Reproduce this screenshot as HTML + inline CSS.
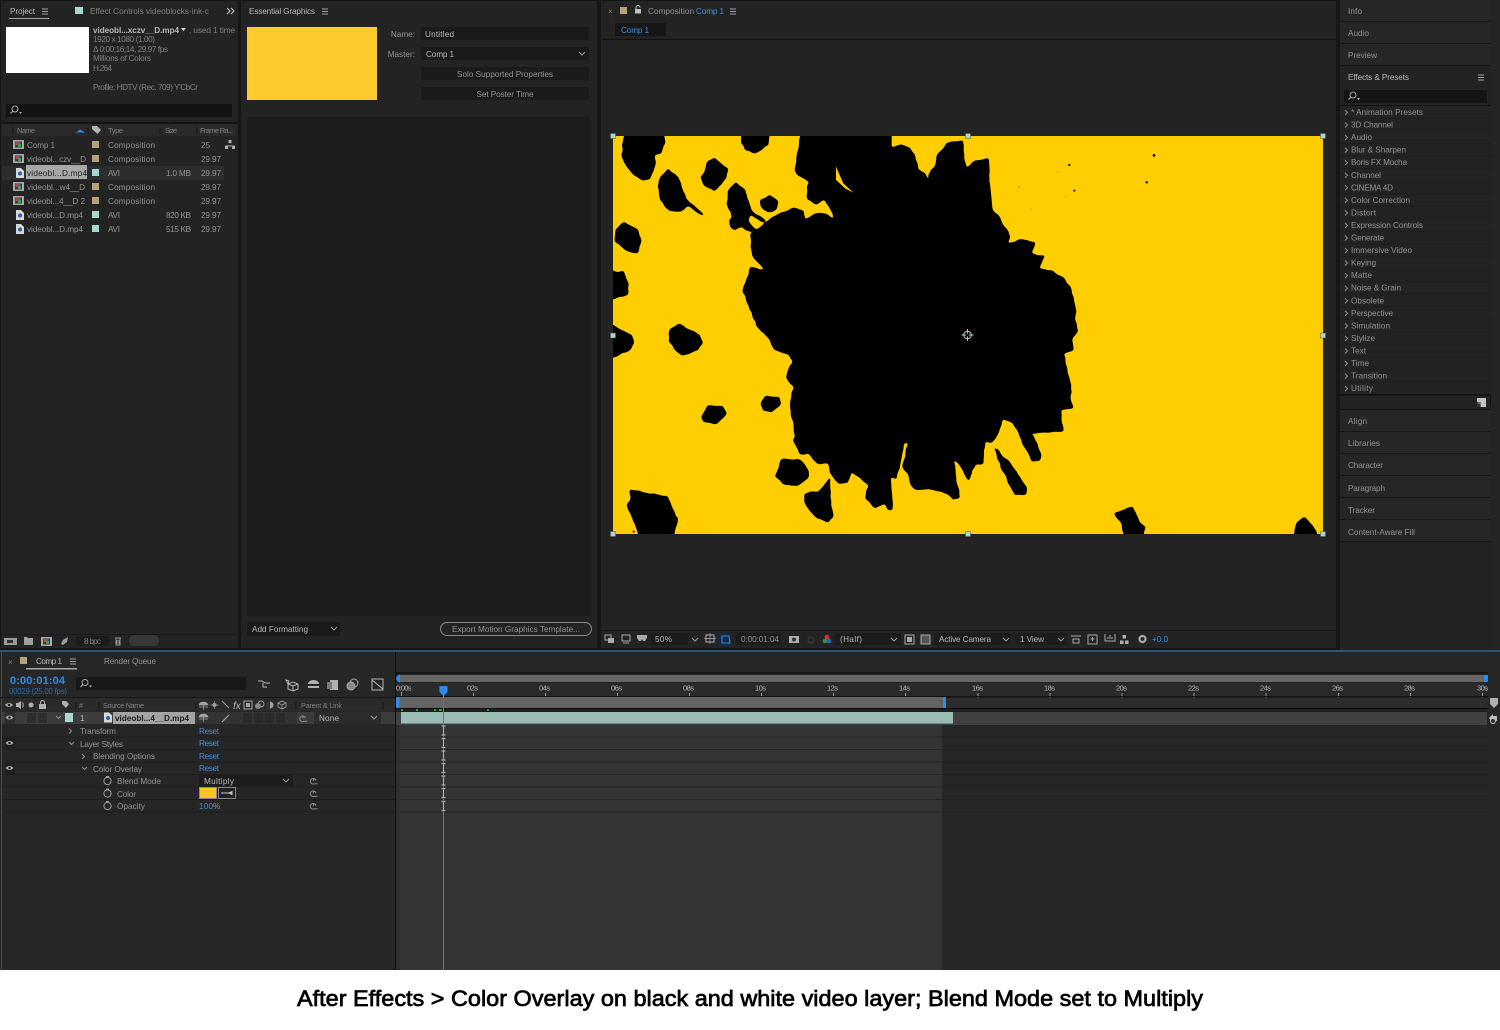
<!DOCTYPE html>
<html><head><meta charset="utf-8"><title>After Effects</title>
<style>
html,body{margin:0;padding:0;background:#fff;width:1500px;height:1030px;overflow:hidden}
svg{display:block;position:absolute;left:0;top:0}
text{font-family:"Liberation Sans",sans-serif;font-size:8.2px;fill:#949494;white-space:pre}
.b{fill:#b8b8b8}.d{fill:#808080}.u{fill:#2d8ceb}.u2{fill:#3f8fd8}.k{fill:#1c1c1c}
</style></head><body>
<svg width="1500" height="1030" viewBox="0 0 1500 1030" xmlns="http://www.w3.org/2000/svg">
<defs>
<filter id="ink" filterUnits="userSpaceOnUse" x="-50" y="-50" width="2400" height="1400" color-interpolation-filters="sRGB">
<feTurbulence type="fractalNoise" baseFrequency=".04" numOctaves="2" seed="4" result="n"/>
<feDisplacementMap in="SourceGraphic" in2="n" scale="9" xChannelSelector="R" yChannelSelector="G" result="dm"/>
<feGaussianBlur in="dm" stdDeviation="4"/>
<feComponentTransfer><feFuncA type="linear" slope="6" intercept="-2.5"/></feComponentTransfer>
</filter>
<g id="film"><rect x="0" y="0" width="11" height="9" fill="#a8a8a8"/><rect x="2" y="1.500" width="7" height="6" fill="#3a3a3a"/><rect x="2.500" y="2" width="3" height="3" fill="#c84040"/><rect x="5" y="4" width="3" height="3" fill="#3aa04a"/><rect x="5.500" y="2" width="2" height="2" fill="#3060c0"/></g>
<g id="doc"><path d="M1 0h5l3 3v7H1z" fill="#d8d8d8"/><circle cx="5" cy="5.500" r="2" fill="#2a62b8"/></g>
<g id="eye"><path d="M-4 0Q0-4 4 0Q0 4-4 0Z" fill="#b0b0b0"/><circle r="1.300" fill="#222"/></g>
<g id="sw"><circle cx="0" cy="0" r="3.600" fill="none" stroke="#a0a0a0" stroke-width="1"/><path d="M-1.500-4.500h3" stroke="#a0a0a0"/></g>
<g id="spiral"><path d="M-1 1a1.300 1.300 0 1 1 2.300-.5a2.800 2.800 0 1 0-1.500 3.300h3.200" fill="none" stroke="#969696" stroke-width=".9"/></g>
<g id="mg"><circle cx="1" cy="-1" r="3" fill="none" stroke="#aaa"/><path d="M-1 1l-2.500 2.500" stroke="#aaa" stroke-width="1.200"/><path d="M5 2h3l-1.500 2z" fill="#aaa"/></g>
<g id="ibeam"><path d="M-2-4.500h4M-2 4.500h4M0-4.500v9" stroke="#a8a8a8" stroke-width="1.200" fill="none"/></g>
<g id="menu"><path d="M0 0h6M0 2.500h6M0 5h6" stroke="#a0a0a0" stroke-width="1"/></g>
<g id="chev"><path d="M0 0l3 3 3-3" fill="none" stroke="#9a9a9a" stroke-width="1"/></g>
<g id="cr"><path d="M0 0l2.500 2.500L0 5" fill="none" stroke="#909090" stroke-width="1"/></g>
<g id="cd"><path d="M0 0l2.500 2.500L5 0" fill="none" stroke="#909090" stroke-width="1"/></g>
</defs>

<!-- base -->
<rect width="1500" height="1030" fill="#161616"/>
<rect y="970" width="1500" height="60" fill="#fff"/>
<rect x="1491" y="0" width="9" height="650" fill="#242424"/>

<!-- PROJECT -->
<rect x="1" y="1" width="237" height="647" fill="#232323"/>
<text x="10" y="14" class="b" textLength="25">Project</text>
<rect x="9" y="18" width="40" height="1" fill="#a0a0a0"/>
<use href="#menu" x="42" y="9"/>
<rect x="75" y="7" width="8" height="7" fill="#a9d6d0"/>
<text x="90" y="14" class="d" textLength="119">Effect Controls videoblocks-ink-c</text>
<path d="M227 8l3 3-3 3M231 8l3 3-3 3" fill="none" stroke="#c0c0c0" stroke-width="1.100"/>
<rect x="6" y="27" width="83" height="46" fill="#fff"/>
<text x="93" y="33" style="font-weight:bold" class="b" textLength="86">videobl...xczv__D.mp4</text>
<path d="M181 28h5l-2.500 3z" fill="#ddd"/>
<text x="189" y="33" class="d" textLength="46">, used 1 time</text>
<text x="93" y="42" class="d" textLength="62">1920 x 1080 (1.00)</text>
<text x="93" y="52" class="d" textLength="75">Δ 0;00;16;14, 29.97 fps</text>
<text x="93" y="61" class="d" textLength="58">Millions of Colors</text>
<text x="93" y="71" class="d" textLength="19">H.264</text>
<text x="93" y="90" class="d" textLength="105">Profile: HDTV (Rec. 709) Y'CbCr</text>
<rect x="6" y="104" width="226" height="13" rx="1" fill="#131313"/>
<use href="#mg" x="14" y="110"/>
<rect x="1" y="122" width="237" height="2" fill="#141414"/>
<rect x="2" y="124" width="234" height="12" fill="#2a2a2a"/>
<text x="17" y="133" class="d" textLength="18" style="font-size:7.500px">Name</text>
<path d="M76 132.500l4-3 5 3z" fill="#2d8ceb"/>
<path d="M13 127v7M88 127v7M104 127v7M160 127v7M197 127v7" stroke="#161616"/>
<path d="M92 126h5l4 4-3.500 4-5.500-5z" fill="#b4b4b4"/>
<text x="108" y="133" class="d" textLength="15" style="font-size:7.500px">Type</text>
<text x="165" y="133" class="d" textLength="12" style="font-size:7.500px">Size</text>
<text x="200" y="133" class="d" textLength="33" style="font-size:7.500px">Frame Ra...</text>
<rect x="2" y="166" width="222" height="14" fill="#2d2d2d"/>
<rect x="26" y="165" width="61" height="14" fill="#a8a8a8"/>

<use href="#film" x="13" y="140"/><text x="27" y="148" textLength="28">Comp 1</text><rect x="92" y="141" width="7" height="7" fill="#b5a27e"/><text x="108" y="148" textLength="47">Composition</text><text x="201" y="148">25</text>
<path d="M230 140.500v3M226 148v-2h8v2" fill="none" stroke="#b0b0b0"/><rect x="228.500" y="140" width="3" height="3" fill="#b0b0b0"/><rect x="225" y="146" width="3" height="3" fill="#b0b0b0"/><rect x="232" y="146" width="3" height="3" fill="#b0b0b0"/>
<use href="#film" x="13" y="154"/><text x="27" y="162" textLength="59">videobl...czv__D</text><rect x="92" y="155" width="7" height="7" fill="#b5a27e"/><text x="108" y="162" textLength="47">Composition</text><text x="201" y="162" textLength="20">29.97</text>
<use href="#doc" x="15" y="168"/><text x="27" y="176" class="k" textLength="60">videobl...D.mp4</text><rect x="92" y="169" width="7" height="7" fill="#a9d6d0"/><text x="108" y="176" textLength="12">AVI</text><text x="166" y="176" textLength="25">1.0 MB</text><text x="201" y="176" textLength="20">29.97</text>
<use href="#film" x="13" y="182"/><text x="27" y="190" textLength="58">videobl...w4__D</text><rect x="92" y="183" width="7" height="7" fill="#b5a27e"/><text x="108" y="190" textLength="47">Composition</text><text x="201" y="190" textLength="20">29.97</text>
<use href="#film" x="13" y="196"/><text x="27" y="204" textLength="58">videobl...4__D 2</text><rect x="92" y="197" width="7" height="7" fill="#b5a27e"/><text x="108" y="204" textLength="47">Composition</text><text x="201" y="204" textLength="20">29.97</text>
<use href="#doc" x="15" y="210"/><text x="27" y="218" textLength="56">videobl...D.mp4</text><rect x="92" y="211" width="7" height="7" fill="#a9d6d0"/><text x="108" y="218" textLength="12">AVI</text><text x="166" y="218" textLength="25">820 KB</text><text x="201" y="218" textLength="20">29.97</text>
<use href="#doc" x="15" y="224"/><text x="27" y="232" textLength="56">videobl...D.mp4</text><rect x="92" y="225" width="7" height="7" fill="#a9d6d0"/><text x="108" y="232" textLength="12">AVI</text><text x="166" y="232" textLength="25">515 KB</text><text x="201" y="232" textLength="20">29.97</text>

<rect x="1" y="634" width="237" height="1" fill="#191919"/>
<rect x="4" y="638" width="13" height="7" fill="#999"/><rect x="7" y="640" width="6" height="3" fill="#333"/>
<path d="M24 637h3l1 1h5v7h-9z" fill="#a0a0a0"/>
<use href="#film" x="41" y="637"/>
<path d="M61 644l2-4 5-3-1 5-4 3zM60 642l2-1M64 646l1-2" fill="#a0a0a0"/>
<rect x="76" y="636" width="33" height="10" rx="2" fill="#1b1b1b"/><text x="84" y="644" class="d" textLength="17">8 bpc</text>
<path d="M115 638h6M116 638v7h4v-7M117 640v4M119 640v4" fill="none" stroke="#9a9a9a"/>
<rect x="129" y="635" width="30" height="11" rx="5" fill="#383838"/>

<!-- ESSENTIAL GRAPHICS -->
<rect x="241" y="1" width="356" height="647" fill="#232323"/>
<text x="249" y="14" class="b" textLength="66">Essential Graphics</text>
<use href="#menu" x="322" y="9"/>
<rect x="247" y="27" width="130" height="73" fill="#ffcb2c"/>
<text x="415" y="37" text-anchor="end">Name:</text>
<rect x="421" y="27" width="168" height="13" rx="1" fill="#1a1a1a"/>
<text x="425" y="37" class="b" textLength="29">Untitled</text>
<text x="415" y="57" text-anchor="end">Master:</text>
<rect x="421" y="47" width="168" height="13" rx="1" fill="#1a1a1a"/>
<text x="426" y="57" class="b" textLength="28">Comp 1</text>
<use href="#chev" x="579" y="52"/>
<rect x="421" y="67" width="168" height="13" rx="1" fill="#1b1b1b"/>
<text x="505" y="77" text-anchor="middle" textLength="96">Solo Supported Properties</text>
<rect x="421" y="87" width="168" height="13" rx="1" fill="#1b1b1b"/>
<text x="505" y="97" text-anchor="middle" textLength="57">Set Poster Time</text>
<rect x="247" y="117" width="344" height="499" rx="1" fill="#1c1c1c"/>
<rect x="247" y="622" width="93" height="14" rx="1" fill="#1a1a1a"/>
<text x="252" y="632" class="b" textLength="56">Add Formatting</text>
<use href="#chev" x="331" y="627"/>
<rect x="440.500" y="622.500" width="151" height="13" rx="6.500" fill="none" stroke="#888"/>
<text x="452" y="632" textLength="128">Export Motion Graphics Template...</text>

<!-- COMP PANEL -->
<rect x="601" y="1" width="735" height="647" fill="#232323"/>
<text x="608" y="14" class="d">×</text>
<rect x="620" y="7" width="7" height="7" fill="#b5a27e"/>
<path d="M636 9.500v-2a2 2 0 0 1 4 0" fill="none" stroke="#c0c0c0"/><rect x="635" y="9" width="6" height="4.500" fill="#c0c0c0"/>
<text x="648" y="14" textLength="46">Composition</text>
<text x="696" y="14" class="u2" textLength="28">Comp 1</text>
<use href="#menu" x="730" y="9"/>
<rect x="615" y="23" width="51" height="13" fill="#171717"/>
<text x="621" y="33" class="u2" textLength="28">Comp 1</text>
<rect x="601" y="39" width="735" height="1" fill="#111"/>

<!-- Viewer image -->
<rect x="613" y="136" width="710" height="398" fill="#ffce00"/>
<clipPath id="vc"><rect x="613" y="136" width="710" height="398"/></clipPath>
<g clip-path="url(#vc)">
<g transform="translate(600 120) scale(.33333)">
<g filter="url(#ink)" fill="#000">
<polygon points="675,10 875,10 875,82 905,72 930,82 945,105 955,145 975,160 990,190 985,165 1005,135 1012,105 1040,70 1090,60 1097,145 1125,120 1165,115 1170,190 1178,270 1205,300 1233,350 1220,372 1260,358 1308,368 1295,400 1338,408 1315,445 1360,452 1395,478 1415,505 1430,575 1425,600 1436,630 1415,660 1422,690 1390,702 1400,740 1415,800 1410,830 1420,865 1382,870 1392,935 1285,940 1300,945 1325,1005 1320,1025 1295,1025 1240,910 1208,897 1195,945 1175,970 1155,965 1150,1030 1125,1035 1105,1085 1085,1045 1060,1015 1080,1135 1060,1140 1040,1120 1000,1110 945,1110 930,1090 925,1065 908,1040 925,968 915,970 890,1080 872,1070 880,1170 865,1172 855,1150 825,1165 795,1135 805,1095 755,1055 745,1090 715,1090 690,1060 685,1030 650,1030 625,1000 600,1005 580,960 585,950 568,850 580,800 557,770 578,725 565,705 520,690 505,655 470,620 428,515 450,440 497,450 455,410 450,340 475,325 520,290 580,262 610,270 618,300 640,280 680,280 707,305 690,265 672,240 650,255 620,235 620,200 630,185 590,165 582,150 595,90 605,10"/>
<polygon points="1180,980 1225,1020 1280,1100 1278,1125 1245,1125 1205,1050"/>
<polygon points="75,10 190,10 195,70 185,100 165,105 168,130 150,178 125,182 90,155 70,125 65,95"/>
<polygon points="205,145 235,170 262,240 315,285 310,288 260,258 245,275 210,275 180,240 173,200 180,170"/>
<polygon points="345,112 385,150 380,175 345,213 310,195 300,170 315,155 320,125"/>
<polygon points="423,10 513,10 505,75 465,102 435,90 423,65"/>
<polygon points="408,185 435,210 455,270 497,302 490,308 450,285 445,300 470,330 445,335 425,320 405,332 388,320 387,300 398,292 380,250 385,210"/>
<polygon points="510,223 535,245 530,270 505,278 480,260 478,240"/>
<polygon points="72,305 110,325 125,360 115,400 85,398 45,365 45,330"/>
<polygon points="10,450 55,455 68,450 88,490 85,525 10,545"/>
<polygon points="10,600 95,645 103,660 95,690 10,725"/>
<polygon points="237,610 300,645 308,670 295,690 245,710 205,665 210,625"/>
<polygon points="495,827 540,830 545,850 515,878 485,870 480,850"/>
<polygon points="325,855 370,860 382,880 350,913 310,908 303,890"/>
<polygon points="545,1017 600,1017 625,1050 625,1075 590,1100 550,1092 525,1070"/>
<polygon points="690,1072 692,1150 703,1190 685,1208 650,1195 615,1155 612,1120 655,1115"/>
<polygon points="90,1108 150,1120 205,1128 230,1190 235,1195 228,1225 213,1280 130,1280 105,1215 78,1155 90,1140"/>
<polygon points="1540,1180 1595,1158 1610,1180 1618,1205 1637,1222 1625,1280 1575,1280 1565,1210"/>
<polygon points="2070,1280 2090,1205 2115,1192 2140,1215 2165,1280"/>
</g>
<polygon points="708,140 730,190 760,218 735,205 708,180" fill="#ffce00"/>
<g fill="#000"><circle cx="101" cy="1235" r="3"/><circle cx="1408" cy="135" r="3.500"/><circle cx="1423" cy="212" r="3"/><circle cx="1662" cy="106" r="4"/><circle cx="1640" cy="187" r="3.500"/><circle cx="1257" cy="201" r="2" opacity=".6"/><circle cx="1294" cy="268" r="1.500" opacity=".6"/><circle cx="1376" cy="156" r="1.500" opacity=".4"/><circle cx="1395" cy="230" r="1.500" opacity=".4"/></g>
</g></g>
<!-- handles -->
<g fill="#a9d6d0" stroke="#555" stroke-width=".5">
<rect x="610.500" y="133.500" width="5" height="5"/><rect x="965.500" y="133.500" width="5" height="5"/><rect x="1320.500" y="133.500" width="5" height="5"/>
<rect x="610.500" y="333" width="5" height="5"/><rect x="1320.500" y="333" width="5" height="5"/>
<rect x="610.500" y="531.500" width="5" height="5"/><rect x="965.500" y="531.500" width="5" height="5"/><rect x="1320.500" y="531.500" width="5" height="5"/>
</g>
<circle cx="967.500" cy="335" r="3.800" fill="none" stroke="#b5cfca" stroke-width="1"/><path d="M967.500 329v12M961.500 335h12" stroke="#b5cfca" stroke-width=".9"/><circle cx="967.500" cy="335" r="1.300" fill="#000"/>

<!-- viewer toolbar -->
<rect x="601" y="630" width="735" height="1" fill="#111"/>
<rect x="605" y="635" width="6" height="5" fill="none" stroke="#aaa"/><rect x="608" y="638" width="6" height="5" fill="#aaa"/>
<rect x="622" y="635" width="8" height="6" fill="none" stroke="#aaa"/><path d="M623 643h6" stroke="#aaa"/>
<path d="M637 635h10v3l-2 3h-2l-1-2-1 2h-2l-2-3z" fill="#aaa"/>
<rect x="651" y="633" width="37" height="12" rx="1" fill="#1c1c1c"/><text x="655" y="642" class="b" textLength="17">50%</text><use href="#chev" x="692" y="638"/>
<rect x="706" y="635" width="8" height="7" fill="none" stroke="#b0b0b0"/><path d="M710 633v11M704 638.500h12" stroke="#b0b0b0" stroke-width=".7"/>
<rect x="718" y="633" width="14" height="13" fill="#172a3e"/><path d="M722 636h7l1 7h-8z" fill="none" stroke="#2d8ceb"/>
<rect x="736" y="633" width="45" height="12" rx="1" fill="#1c1c1c"/><text x="741" y="642" textLength="38">0:00:01:04</text>
<rect x="789" y="636" width="10" height="7" fill="#b0b0b0"/><circle cx="794" cy="639.500" r="2" fill="#333"/>
<circle cx="811" cy="640" r="3" fill="none" stroke="#3c3c3c"/>
<circle cx="827" cy="637" r="2.300" fill="#d03030"/><circle cx="825" cy="641" r="2.300" fill="#2a9a40"/><circle cx="829" cy="641" r="2.300" fill="#2a60d0"/>
<rect x="835" y="633" width="66" height="12" rx="1" fill="#1c1c1c"/><text x="840" y="642" class="b" textLength="22">(Half)</text><use href="#chev" x="891" y="638"/>
<rect x="905" y="635" width="9" height="9" fill="none" stroke="#aaa"/><rect x="907" y="637" width="5" height="5" fill="#aaa"/>
<rect x="921" y="635" width="9" height="9" fill="#555" stroke="#aaa"/>
<rect x="934" y="633" width="76" height="12" rx="1" fill="#1c1c1c"/><text x="939" y="642" class="b" textLength="52">Active Camera</text><use href="#chev" x="1003" y="638"/>
<rect x="1015" y="633" width="52" height="12" rx="1" fill="#1c1c1c"/><text x="1020" y="642" class="b" textLength="24">1 View</text><use href="#chev" x="1058" y="638"/>
<path d="M1071 636h10M1073 639h6v4h-6z" fill="none" stroke="#aaa"/>
<rect x="1088" y="635" width="9" height="9" fill="none" stroke="#aaa"/><path d="M1092.500 637v4M1090.500 639h4" stroke="#aaa"/>
<path d="M1105 634v7h10v-7M1108 637v2M1110 635v4M1112 637v2" fill="none" stroke="#aaa"/>
<rect x="1122.500" y="635" width="3.500" height="3.500" fill="#b0b0b0"/><rect x="1120" y="640.500" width="3.500" height="3.500" fill="#b0b0b0"/><rect x="1125" y="640.500" width="3.500" height="3.500" fill="#b0b0b0"/>
<circle cx="1142.500" cy="639" r="3" fill="none" stroke="#aaa" stroke-width="2.200"/>
<text x="1152" y="642" class="u2" textLength="16">+0.0</text>

<!-- RIGHT PANELS -->
<rect x="1337" y="0" width="3" height="650" fill="#161616"/>
<rect x="1340" y="0" width="151" height="21" fill="#262626"/><text x="1348" y="14" textLength="14">Info</text>
<rect x="1340" y="22" width="151" height="21" fill="#262626"/><text x="1348" y="36" textLength="21">Audio</text>
<rect x="1340" y="44" width="151" height="21" fill="#262626"/><text x="1348" y="58" textLength="29">Preview</text>
<rect x="1340" y="66" width="152" height="343" fill="#232323"/>
<text x="1348" y="80" class="b" textLength="61">Effects &amp; Presets</text>
<use href="#menu" x="1478" y="75"/>
<rect x="1344" y="90" width="143" height="13" rx="1" fill="#141414"/>
<use href="#mg" x="1352" y="96"/>
<rect x="1340" y="105" width="151" height="1" fill="#111"/>
<path d="M1340 118.300h151M1340 130.900h151M1340 143.400h151M1340 156h151M1340 168.500h151M1340 181.100h151M1340 193.600h151M1340 206.200h151M1340 218.700h151M1340 231.300h151M1340 243.800h151M1340 256.400h151M1340 268.900h151M1340 281.500h151M1340 294h151M1340 306.600h151M1340 319.100h151M1340 331.700h151M1340 344.200h151M1340 356.800h151M1340 369.300h151M1340 381.900h151" stroke="#1e1e1e"/>
<use href="#cr" x="1345" y="110"/><text x="1351" y="115" textLength="72">* Animation Presets</text>
<use href="#cr" x="1345" y="122.500"/><text x="1351" y="127.500" textLength="42">3D Channel</text>
<use href="#cr" x="1345" y="135"/><text x="1351" y="140" textLength="21">Audio</text>
<use href="#cr" x="1345" y="147.600"/><text x="1351" y="152.600" textLength="55">Blur &amp; Sharpen</text>
<use href="#cr" x="1345" y="160.200"/><text x="1351" y="165.200" textLength="56">Boris FX Mocha</text>
<use href="#cr" x="1345" y="172.800"/><text x="1351" y="177.800" textLength="30">Channel</text>
<use href="#cr" x="1345" y="185.300"/><text x="1351" y="190.300" textLength="42">CINEMA 4D</text>
<use href="#cr" x="1345" y="197.900"/><text x="1351" y="202.900" textLength="59">Color Correction</text>
<use href="#cr" x="1345" y="210.400"/><text x="1351" y="215.400" textLength="25">Distort</text>
<use href="#cr" x="1345" y="223"/><text x="1351" y="228" textLength="72">Expression Controls</text>
<use href="#cr" x="1345" y="235.500"/><text x="1351" y="240.500" textLength="33">Generate</text>
<use href="#cr" x="1345" y="248"/><text x="1351" y="253" textLength="61">Immersive Video</text>
<use href="#cr" x="1345" y="260.600"/><text x="1351" y="265.600" textLength="25">Keying</text>
<use href="#cr" x="1345" y="273.200"/><text x="1351" y="278.200" textLength="21">Matte</text>
<use href="#cr" x="1345" y="285.700"/><text x="1351" y="290.700" textLength="50">Noise &amp; Grain</text>
<use href="#cr" x="1345" y="298.300"/><text x="1351" y="303.300" textLength="33">Obsolete</text>
<use href="#cr" x="1345" y="310.800"/><text x="1351" y="315.800" textLength="42">Perspective</text>
<use href="#cr" x="1345" y="323.400"/><text x="1351" y="328.400" textLength="39">Simulation</text>
<use href="#cr" x="1345" y="335.900"/><text x="1351" y="340.900" textLength="24">Stylize</text>
<use href="#cr" x="1345" y="348.500"/><text x="1351" y="353.500" textLength="15">Text</text>
<use href="#cr" x="1345" y="361"/><text x="1351" y="366" textLength="18">Time</text>
<use href="#cr" x="1345" y="373.600"/><text x="1351" y="378.600" textLength="36">Transition</text>
<use href="#cr" x="1345" y="386"/><text x="1351" y="391" textLength="22">Utility</text>
<rect x="1340" y="394" width="151" height="1.500" fill="#111"/>
<rect x="1490" y="395" width="1" height="12" fill="#111"/>
<path d="M1477 398h9v9h-9z" fill="#c4c4c4"/><path d="M1477 402h4v5h-4z" fill="#333"/><path d="M1478 403h3v4" fill="none" stroke="#c4c4c4" stroke-width=".7"/>
<rect x="1340" y="410" width="151" height="21" fill="#262626"/><text x="1348" y="424" textLength="19">Align</text>
<rect x="1340" y="432" width="151" height="21" fill="#262626"/><text x="1348" y="446" textLength="32">Libraries</text>
<rect x="1340" y="454" width="151" height="21" fill="#262626"/><text x="1348" y="468" textLength="35">Character</text>
<rect x="1340" y="476" width="151" height="21" fill="#262626"/><text x="1348" y="491" textLength="37">Paragraph</text>
<rect x="1340" y="498" width="151" height="21" fill="#262626"/><text x="1348" y="513" textLength="27">Tracker</text>
<rect x="1340" y="520" width="151" height="21" fill="#262626"/><text x="1348" y="535" textLength="67">Content-Aware Fill</text>
<rect x="1340" y="542" width="152" height="108" fill="#232323"/>

<!-- TIMELINE -->
<rect x="0" y="650" width="1500" height="2" fill="#2a5378"/>
<rect x="0" y="652" width="1500" height="318" fill="#262626"/>
<rect x="1" y="650" width="1" height="320" fill="#2a5378"/>
<text x="8" y="665" class="d">×</text>
<rect x="20" y="657" width="7" height="7" fill="#b5a27e"/>
<text x="36" y="664" class="b" textLength="26">Comp 1</text>
<use href="#menu" x="70" y="659"/>
<rect x="26" y="668" width="51" height="1.500" fill="#a8a8a8"/>
<text x="104" y="664" textLength="52">Render Queue</text>
<text x="10" y="684" class="u" style="font-size:11px;font-weight:bold" textLength="55">0:00:01:04</text>
<text x="9" y="694" class="u" style="font-size:7.800px;opacity:.65" textLength="58">00029 (25.00 fps)</text>
<rect x="76" y="677" width="170" height="13" rx="1" fill="#181818"/>
<use href="#mg" x="84" y="683.500"/>
<path d="M258 681h4l3 2h5M263 683v4h4M265 683h1" fill="none" stroke="#b5b5b5"/>
<path d="M286 680l3 1-1 3zM288 684l5-2 5 2v5l-5 2-5-2zM288 684l5 2 5-2M293 686v5" fill="none" stroke="#b5b5b5"/>
<path d="M308 684a5.500 4 0 0 1 11 0zM308 686h11v2h-11zM313.500 680v8" fill="#b0b0b0"/>
<rect x="330" y="680" width="8" height="10" fill="#b0b0b0"/><rect x="327" y="682" width="5" height="7" fill="#777"/>
<circle cx="354" cy="683" r="4" fill="none" stroke="#aaa"/><circle cx="351" cy="686" r="4" fill="#888" stroke="#aaa"/>
<rect x="372" y="679" width="11" height="11" fill="none" stroke="#b5b5b5"/><path d="M372 680l11 9" stroke="#b5b5b5"/>
<rect x="0" y="697" width="395" height="1.500" fill="#151515"/>
<rect x="2" y="698" width="393" height="13" fill="#2a2a2a"/>
<use href="#eye" x="9" y="705"/>
<path d="M16 703h2l3-2v8l-3-2h-2z" fill="#b0b0b0"/><path d="M22.500 702.500q1.500 2.500 0 5" stroke="#b0b0b0" fill="none"/>
<circle cx="31" cy="705" r="2.500" fill="#b0b0b0"/>
<rect x="39" y="704" width="7" height="5" fill="#b0b0b0"/><path d="M40.500 704v-1.500a2 2 0 0 1 4 0v1.500" fill="none" stroke="#b0b0b0"/>
<path d="M62 701h4l3 3-3 4-4-4z" fill="#b0b0b0"/>
<path d="M76 702v7M99 702v7M196 702v7M296 702v7M383 702v7" stroke="#161616"/>
<text x="79" y="708" class="d" style="font-size:7px">#</text>
<text x="103" y="708" class="d" style="font-size:7.200px" textLength="41">Source Name</text>
<path d="M199 705a4.500 3 0 0 1 9 0zM199 707h9M203.500 702v8" fill="#a0a0a0" stroke="#a0a0a0" stroke-width=".7"/>
<circle cx="214.500" cy="705" r="2" fill="#a0a0a0"/><path d="M214.500 701v8M210.500 705h8" stroke="#a0a0a0" stroke-width=".7"/>
<path d="M222 701l7 7" stroke="#a0a0a0"/>
<text x="233" y="709" class="b" style="font-style:italic;font-size:10px">fx</text>
<rect x="244" y="701" width="8" height="8" fill="none" stroke="#a0a0a0"/><rect x="246" y="703" width="4" height="4" fill="#a0a0a0"/>
<circle cx="261" cy="704" r="3" fill="none" stroke="#a0a0a0"/><circle cx="258" cy="706" r="3" fill="#888"/>
<circle cx="270" cy="705" r="3.500" fill="#a0a0a0"/><path d="M270 701.500a3.500 3.500 0 0 0 0 7z" fill="#333"/>
<path d="M278 703l4-2 4 2v4l-4 2-4-2zM278 703l4 2 4-2M282 705v4" fill="none" stroke="#a0a0a0" stroke-width=".8"/>
<text x="301" y="708" class="d" style="font-size:7.200px" textLength="41">Parent &amp; Link</text>

<rect x="2" y="712" width="393" height="12" fill="#3c3c3c"/>
<rect x="5" y="712" width="10" height="12" fill="#2c2c2c"/>
<use href="#eye" x="9.500" y="717.500"/>
<rect x="27" y="713" width="9" height="10" fill="#2e2e2e"/><rect x="38" y="713" width="9" height="10" fill="#2e2e2e"/>
<use href="#cd" x="56" y="716"/>
<rect x="65" y="713" width="8" height="9" fill="#a9d6d0"/>
<text x="80" y="721" class="b">1</text>
<use href="#doc" x="103" y="712.500"/>
<rect x="113" y="712" width="82" height="12" fill="#a4a4a4"/>
<text x="115" y="721" class="k" style="font-weight:bold" textLength="74">videobl...4__D.mp4</text>
<rect x="197" y="712" width="100" height="12" fill="#333"/>
<path d="M199 717a4.500 3 0 0 1 9 0zM199 719h9M203.500 714v8" fill="#a0a0a0" stroke="#a0a0a0" stroke-width=".7"/>
<path d="M222 722l7-7" stroke="#b0b0b0"/>
<g fill="#2a2a2a"><rect x="243" y="713" width="9" height="10"/><rect x="254" y="713" width="9" height="10"/><rect x="265" y="713" width="9" height="10"/><rect x="276" y="713" width="9" height="10"/></g>
<use href="#spiral" x="304" y="717.500"/>
<rect x="314" y="712" width="67" height="12" fill="#2c2c2c"/>
<text x="319" y="721" class="b" textLength="20">None</text>
<use href="#chev" x="371" y="716"/>

<path d="M2 737h393M2 749.500h393M2 762h393M2 774.500h393M2 787h393M2 799.500h393M2 812h393" stroke="#1e1e1e"/>
<rect x="5" y="738" width="10" height="11" fill="#1e1e1e"/><use href="#eye" x="9.500" y="743"/>
<rect x="5" y="763" width="10" height="11" fill="#1e1e1e"/><use href="#eye" x="9.500" y="768"/>
<use href="#cr" x="69" y="728.500"/><text x="80" y="734" textLength="36">Transform</text>
<use href="#cd" x="69" y="742"/><text x="80" y="747" textLength="43">Layer Styles</text>
<use href="#cr" x="82" y="754"/><text x="93" y="759" textLength="62">Blending Options</text>
<use href="#cd" x="82" y="767"/><text x="93" y="772" textLength="49">Color Overlay</text>
<text x="199" y="734" class="u2" textLength="20">Reset</text>
<text x="199" y="746" class="u2" textLength="20">Reset</text>
<text x="199" y="759" class="u2" textLength="20">Reset</text>
<text x="199" y="771" class="u2" textLength="20">Reset</text>
<use href="#sw" x="107.500" y="781"/><text x="117" y="784" textLength="44">Blend Mode</text>
<rect x="199" y="775" width="94" height="11" fill="#1d1d1d"/><text x="204" y="784" class="b" textLength="30">Multiply</text><use href="#chev" x="283" y="779"/>
<use href="#spiral" x="314.500" y="780"/>
<use href="#sw" x="107.500" y="793.500"/><text x="117" y="797" textLength="19">Color</text>
<rect x="199.500" y="787.500" width="17" height="11" fill="#ffc425" stroke="#888"/>
<rect x="218.500" y="787.500" width="17" height="11" fill="#222" stroke="#888"/><path d="M221 793h8l3-1.500v3l-3-1.500" fill="#c8c8c8" stroke="#c8c8c8"/>
<use href="#spiral" x="314.500" y="792.500"/>
<use href="#sw" x="107.500" y="806"/><text x="117" y="809" textLength="28">Opacity</text>
<text x="199" y="809" class="u2" textLength="14">100</text><text x="213" y="809" textLength="8">%</text>
<use href="#spiral" x="314.500" y="805"/>

<rect x="395" y="652" width="1" height="318" fill="#0e0e0e"/>

<!-- timeline right -->
<rect x="396" y="672" width="1096" height="2" fill="#151515"/>
<rect x="398" y="675" width="1088" height="7" fill="#666"/>
<path d="M400 674.500v8l-3-1.500-1-2.500 1-2.500z" fill="#2d8ceb"/>
<rect x="1484" y="675" width="4" height="7" rx="1.500" fill="#2d8ceb"/>
<rect x="396" y="683" width="1092" height="14" fill="#2a2a2a"/>
<text x="396" y="690.500" style="font-size:7.500px" class="b" textLength="15.500">0:00s</text>
<text x="467" y="690.500" style="font-size:7.500px" class="b" textLength="11">02s</text>
<text x="539" y="690.500" style="font-size:7.500px" class="b" textLength="11">04s</text>
<text x="611" y="690.500" style="font-size:7.500px" class="b" textLength="11">06s</text>
<text x="683" y="690.500" style="font-size:7.500px" class="b" textLength="11">08s</text>
<text x="755" y="690.500" style="font-size:7.500px" class="b" textLength="11">10s</text>
<text x="827" y="690.500" style="font-size:7.500px" class="b" textLength="11">12s</text>
<text x="899" y="690.500" style="font-size:7.500px" class="b" textLength="11">14s</text>
<text x="972" y="690.500" style="font-size:7.500px" class="b" textLength="11">16s</text>
<text x="1044" y="690.500" style="font-size:7.500px" class="b" textLength="11">18s</text>
<text x="1116" y="690.500" style="font-size:7.500px" class="b" textLength="11">20s</text>
<text x="1188" y="690.500" style="font-size:7.500px" class="b" textLength="11">22s</text>
<text x="1260" y="690.500" style="font-size:7.500px" class="b" textLength="11">24s</text>
<text x="1332" y="690.500" style="font-size:7.500px" class="b" textLength="11">26s</text>
<text x="1404" y="690.500" style="font-size:7.500px" class="b" textLength="11">28s</text>
<text x="1477" y="690.500" style="font-size:7.500px" class="b" textLength="11">30s</text>
<path d="M401.500 692v6M473.500 693v3M545.500 693v3M617.500 693v3M689.500 693v3M761.500 693v3M833.500 693v3M905.500 693v3M978 693v8M1050 693v8M1122 693v8M1194 693v8M1266 693v8M1338.500 693v8M1410.500 693v8M1482.500 693v8" stroke="#9a9a9a"/>
<rect x="396" y="696" width="1092" height="1.500" fill="#111"/>
<rect x="396" y="698" width="1096" height="11" fill="#2c2c2c"/>
<rect x="398" y="697" width="546" height="11" fill="#636363"/>
<rect x="396" y="697" width="3.500" height="11" rx="1.500" fill="#2d8ceb"/>
<rect x="943" y="697" width="3" height="12" rx="1" fill="#2d8ceb"/>
<rect x="396" y="708" width="1092" height="1.500" fill="#111"/>
<g fill="#1ca81c"><rect x="401" y="709" width="2" height="2"/><rect x="416" y="709" width="2" height="2"/><rect x="434" y="709" width="2" height="2"/><rect x="439" y="709" width="3" height="2"/><rect x="487" y="709" width="2" height="2"/></g>
<rect x="396" y="711" width="1091" height="1" fill="#1a1a1a"/>
<rect x="396" y="712" width="1091" height="13" fill="#414141"/>
<rect x="401" y="712" width="552" height="12" fill="#9bbdb6"/>
<rect x="401" y="723" width="552" height="1" fill="#6d8a85"/>
<rect x="396" y="725" width="4" height="245" fill="#2e2e2e"/>
<rect x="400" y="725" width="542" height="245" fill="#343434"/>
<path d="M400 737h542M400 749.500h542M400 762h542M400 774.500h542M400 787h542M400 799.500h542M400 812h542" stroke="#262626"/>
<path d="M942 737h546M942 749.500h546M942 762h546M942 774.500h546M942 787h546M942 799.500h546M942 812h546" stroke="#202020"/>
<rect x="1488" y="652" width="4" height="318" fill="#262626"/>
<path d="M1490 698h8v6l-4 4-4-4z" fill="#b0b0b0"/>
<path d="M1489 718l4-4v2h4v5h-4v2z" fill="#c0c0c0"/><circle cx="1493" cy="721" r="2.500" fill="#333" stroke="#c0c0c0"/>
<rect x="443" y="686" width="1" height="284" fill="#3a82c8"/>
<path d="M439.500 686h8v6l-4 4-4-4z" fill="#2d8ceb"/>
<use href="#ibeam" x="443.500" y="730.500"/><use href="#ibeam" x="443.500" y="743"/><use href="#ibeam" x="443.500" y="755.500"/><use href="#ibeam" x="443.500" y="768"/><use href="#ibeam" x="443.500" y="780.500"/><use href="#ibeam" x="443.500" y="793"/><use href="#ibeam" x="443.500" y="806"/>

<!-- caption -->
<text x="297" y="1006" textLength="906" lengthAdjust="spacingAndGlyphs" style="font-size:22px;fill:#000;stroke:#000;stroke-width:.7">After Effects &gt; Color Overlay on black and white video layer; Blend Mode set to Multiply</text>
</svg>
</body></html>
